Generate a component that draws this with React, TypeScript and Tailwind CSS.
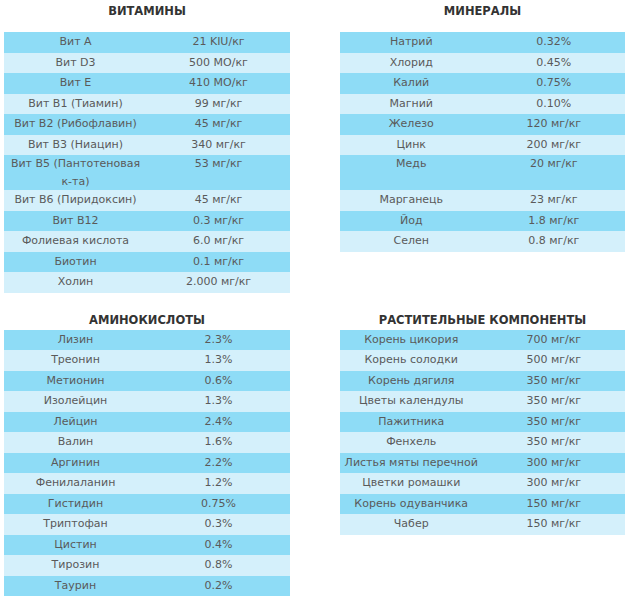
type Row = [string, string, boolean?];

const vitamins: Row[] = [
  ["Вит A", "21 KIU/кг"],
  ["Вит D3", "500 МО/кг"],
  ["Вит E", "410 МО/кг"],
  ["Вит B1 (Тиамин)", "99 мг/кг"],
  ["Вит B2 (Рибофлавин)", "45 мг/кг"],
  ["Вит B3 (Ниацин)", "340 мг/кг"],
  ["Вит B5 (Пантотеновая к-та)", "53 мг/кг", true],
  ["Вит B6 (Пиридоксин)", "45 мг/кг"],
  ["Вит B12", "0.3 мг/кг"],
  ["Фолиевая кислота", "6.0 мг/кг"],
  ["Биотин", "0.1 мг/кг"],
  ["Холин", "2.000 мг/кг"],
];

const minerals: Row[] = [
  ["Натрий", "0.32%"],
  ["Хлорид", "0.45%"],
  ["Калий", "0.75%"],
  ["Магний", "0.10%"],
  ["Железо", "120 мг/кг"],
  ["Цинк", "200 мг/кг"],
  ["Медь", "20 мг/кг", true],
  ["Марганець", "23 мг/кг"],
  ["Йод", "1.8 мг/кг"],
  ["Селен", "0.8 мг/кг"],
];

const aminos: Row[] = [
  ["Лизин", "2.3%"],
  ["Треонин", "1.3%"],
  ["Метионин", "0.6%"],
  ["Изолейцин", "1.3%"],
  ["Лейцин", "2.4%"],
  ["Валин", "1.6%"],
  ["Аргинин", "2.2%"],
  ["Фенилаланин", "1.2%"],
  ["Гистидин", "0.75%"],
  ["Триптофан", "0.3%"],
  ["Цистин", "0.4%"],
  ["Тирозин", "0.8%"],
  ["Таурин", "0.2%"],
];

const plants: Row[] = [
  ["Корень цикория", "700 мг/кг"],
  ["Корень солодки", "500 мг/кг"],
  ["Корень дягиля", "350 мг/кг"],
  ["Цветы календулы", "350 мг/кг"],
  ["Пажитника", "350 мг/кг"],
  ["Фенхель", "350 мг/кг"],
  ["Листья мяты перечной", "300 мг/кг"],
  ["Цветки ромашки", "300 мг/кг"],
  ["Корень одуванчика", "150 мг/кг"],
  ["Чабер", "150 мг/кг"],
];

function Table({ rows }: { rows: Row[] }) {
  return (
    <div className="flex flex-col">
      {rows.map(([name, value, tall], i) => (
        <div
          key={name}
          className={`grid grid-cols-2 text-center ${i % 2 === 0 ? "bg-[#8edcf6]" : "bg-[#d4f0fb]"} ${
            tall ? "h-[35px] items-start leading-[17.5px]" : "h-[20.5px] items-center leading-[20px]"
          }`}
        >
          <div className="px-1">{name}</div>
          <div className="px-1">{value}</div>
        </div>
      ))}
    </div>
  );
}

function Heading({ children, top }: { children: string; top?: boolean }) {
  return (
    <div
      className={`flex items-center justify-center font-bold text-[#333] text-[11.5px] ${
        top ? "h-[24px] mb-[8px]" : "h-[18px]"
      }`}
    >
      {children}
    </div>
  );
}

export default function App() {
  return (
    <div
      className="w-[629px] h-[600px] bg-white text-[11px] text-[#5a5a5a] overflow-hidden"
      style={{ fontFamily: '"DejaVu Sans", Verdana, sans-serif' }}
    >
      <div className="flex items-start pl-[4px]">
        <div className="w-[286px]">
          <Heading top>ВИТАМИНЫ</Heading>
          <Table rows={vitamins} />
        </div>
        <div className="w-[285px] ml-[50px]">
          <Heading top>МИНЕРАЛЫ</Heading>
          <Table rows={minerals} />
        </div>
      </div>
      <div className="flex items-start pl-[4px] mt-[19px]">
        <div className="w-[286px]">
          <Heading>АМИНОКИСЛОТЫ</Heading>
          <Table rows={aminos} />
        </div>
        <div className="w-[285px] ml-[50px]">
          <Heading>РАСТИТЕЛЬНЫЕ КОМПОНЕНТЫ</Heading>
          <Table rows={plants} />
        </div>
      </div>
    </div>
  );
}
